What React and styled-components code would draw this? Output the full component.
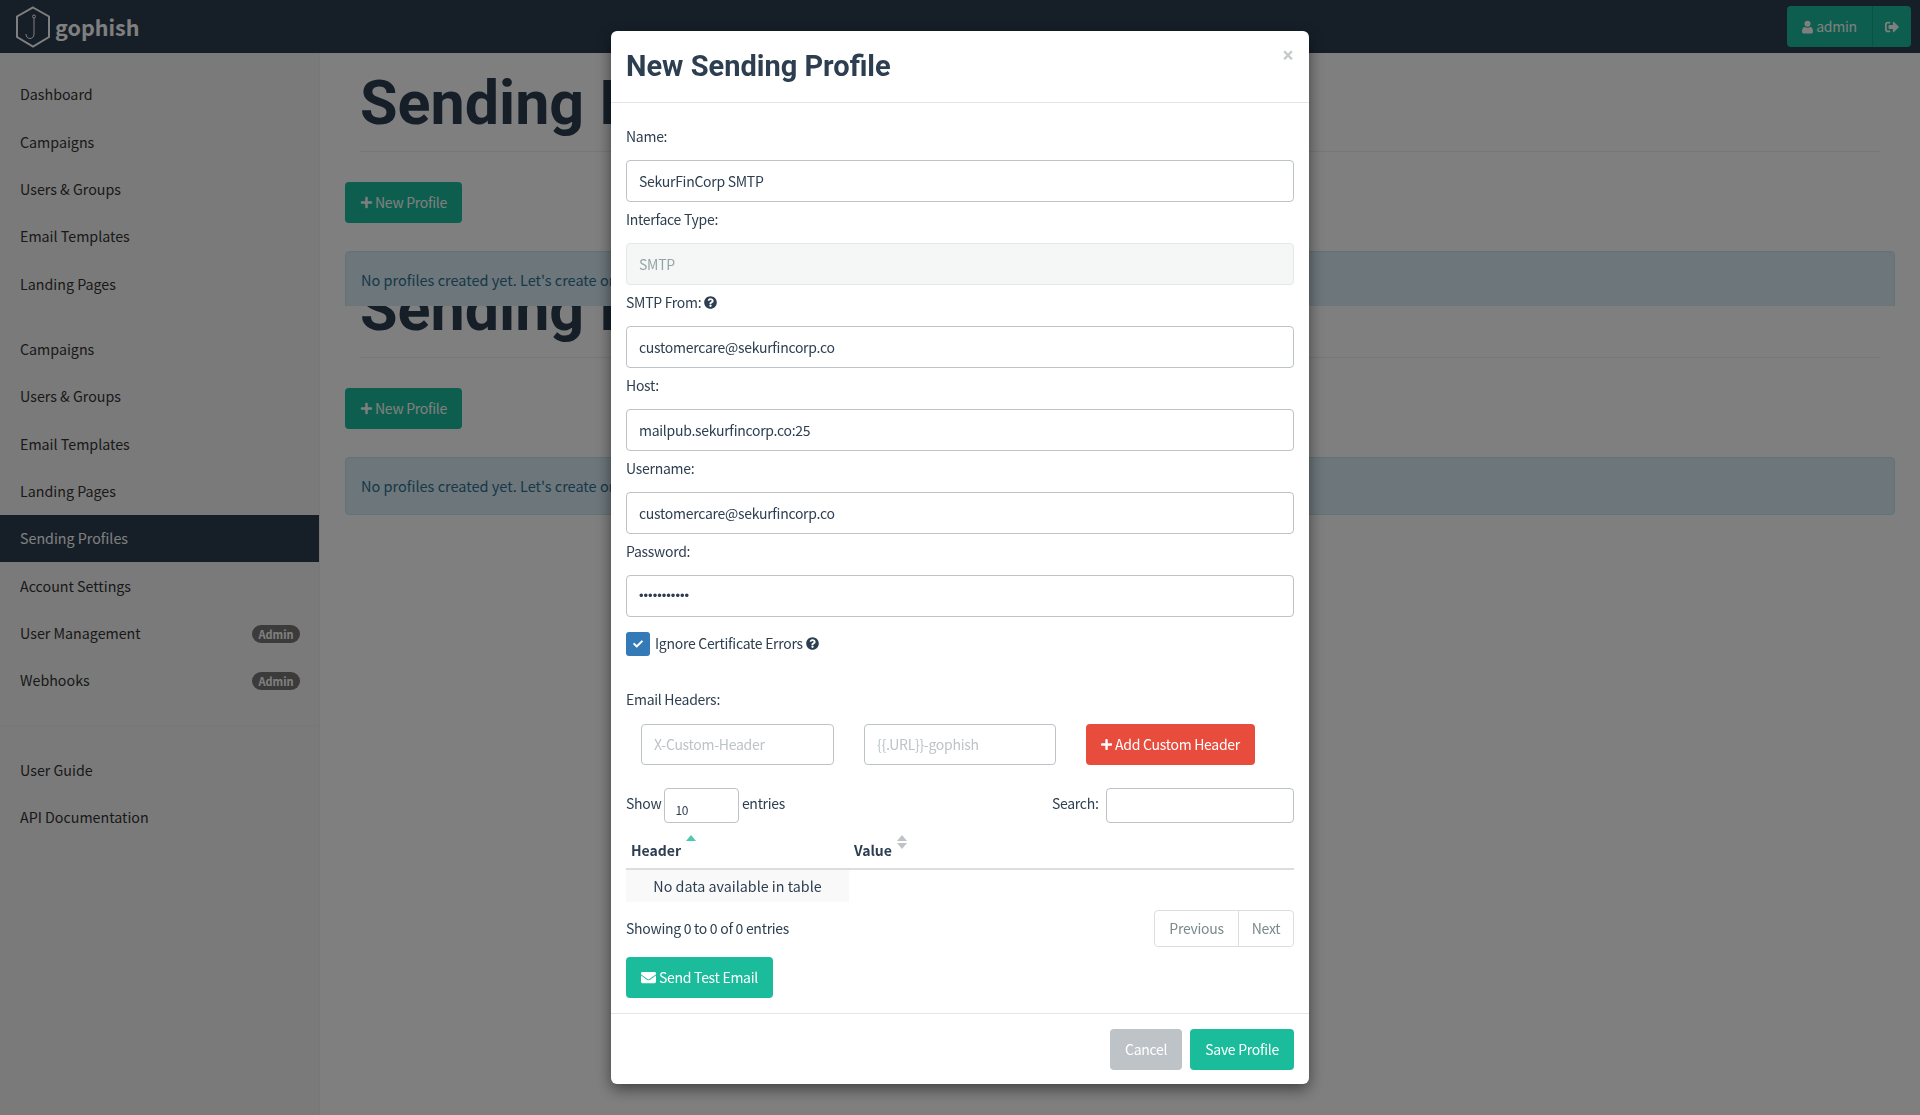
import React from "react";
import styled, { createGlobalStyle } from "styled-components";
import { FaPlus, FaEnvelope, FaCheck, FaQuestionCircle, FaSignOutAlt } from "react-icons/fa";

const GlobalStyle = createGlobalStyle`
  html, body {
    margin: 0;
    height: 100%;
    overflow: hidden;
  }
  body {
    font-family: "Noto Sans CJK SC", "Noto Sans", sans-serif;
    font-size: 14px;
    letter-spacing: -0.28px;
    line-height: 23px;
    color: #2c3e50;
    background: #fff;
  }
  * {
    box-sizing: border-box;
  }
`;

const Navbar = styled.div`
  display: flex;
  align-items: center;
  justify-content: space-between;
  height: 53px;
  padding: 0 9px 0 15px;
  background: #2c3e50;
`;

const Brand = styled.div`
  display: flex;
  align-items: center;
  gap: 4px;
  color: #fff;
  font-size: 21.5px;
  font-weight: 700;
  letter-spacing: 0;
`;

const UserGroup = styled.div`
  display: flex;
  height: 41px;
  border-radius: 4px;
  overflow: hidden;
  background: #1abc9c;
  color: #fff;
`;

const UserPart = styled.div`
  display: flex;
  align-items: center;
  justify-content: center;
  gap: 3px;
  width: ${(p) => p.$w}px;
  & + & {
    border-left: 1px solid #17a589;
  }
`;

const Layout = styled.div`
  display: grid;
  grid-template-columns: 320px 1fr;
  height: 1062px;
`;

const Sidebar = styled.div`
  padding-top: 18px;
  background: #f5f5f5;
  border-right: 1px solid #eee;
  font-size: 14.25px;
  letter-spacing: 0;
`;

const NavGroup = styled.div`
  margin-bottom: 18.25px;
`;

const NavItem = styled.div`
  display: flex;
  align-items: center;
  justify-content: space-between;
  height: 47.3px;
  padding: 0 19px 1.5px 20px;
  color: ${(p) => (p.$active ? "#fff" : "#333")};
  background: ${(p) => (p.$active ? "#2c3e50" : "transparent")};
`;

const Badge = styled.span`
  display: block;
  width: 48px;
  height: 18px;
  margin-top: 3px;
  border-radius: 9px;
  background: #777;
  color: #fff;
  font-size: 11px;
  font-weight: 700;
  line-height: 18px;
  text-align: center;
`;

const SideRule = styled.div`
  height: 1px;
  margin: 21px 0 20.5px;
  background: #eee;
`;

const Main = styled.div`
  padding: 0 25px;
`;

const Section = styled.div`
  position: relative;
  z-index: ${(p) => (p.$clipped ? 1 : 0)};
  height: ${(p) => (p.$clipped ? "253px" : "auto")};
  margin-bottom: ${(p) => (p.$clipped ? "-47px" : "0")};
  overflow: ${(p) => (p.$clipped ? "hidden" : "visible")};
`;

const PageHeader = styled.div`
  height: 99px;
  margin: 0 15px;
  border-bottom: 1px solid #eee;
`;

const PageTitle = styled.h1`
  margin: 0;
  font-family: Roboto, sans-serif;
  font-size: 61px;
  font-weight: 700;
  letter-spacing: 0;
  line-height: 100px;
  white-space: nowrap;
`;

const Button = styled.button`
  display: inline-flex;
  align-items: center;
  justify-content: center;
  gap: 3px;
  height: 41px;
  padding: 0 15px;
  border: 0;
  border-radius: 4px;
  background: ${(p) => p.$bg || "#1abc9c"};
  color: #fff;
  font: inherit;
  letter-spacing: inherit;
  white-space: nowrap;
  svg {
    width: 13px;
    height: 13px;
  }
`;

const NewButton = styled(Button)`
  gap: 2px;
  margin-top: 30px;
`;

const Alert = styled.div`
  height: 58px;
  margin-top: 28px;
  padding: 15px;
  border: 1px solid #bce8f1;
  border-radius: 4px;
  background: #d9edf7;
  color: #31708f;
  font-size: 14.5px;
  letter-spacing: 0;
  line-height: 26px;
`;

const Backdrop = styled.div`
  position: fixed;
  inset: 0;
  z-index: 10;
  background: rgba(0, 0, 0, 0.5);
`;

const ModalLayer = styled.div`
  position: fixed;
  inset: 0;
  z-index: 11;
  display: flex;
  justify-content: center;
  align-items: flex-start;
  padding-top: 31px;
`;

const Modal = styled.div`
  width: 698px;
  height: 1053px;
  border-radius: 6px;
  background: #fff;
  box-shadow: 0 5px 15px rgba(0, 0, 0, 0.5);
`;

const ModalHeader = styled.div`
  display: flex;
  align-items: flex-start;
  justify-content: space-between;
  height: 72px;
  padding: 15px;
  border-bottom: 1px solid #e5e5e5;
`;

const ModalTitle = styled.h4`
  margin: 1px 0 0;
  font-family: Roboto, sans-serif;
  font-size: 29px;
  font-weight: 700;
  letter-spacing: 0;
  line-height: 38px;
`;

const Close = styled.span`
  margin: -1px 1px 0 0;
  color: #c4c8c8;
  font-family: Roboto, sans-serif;
  font-size: 20px;
  font-weight: 700;
  line-height: 20px;
`;

const ModalBody = styled.div`
  padding: 15.5px 15px 15px;
`;

const Label = styled.div`
  display: flex;
  align-items: center;
  gap: 3px;
  margin: 6px 0 12.5px;
  svg {
    width: 13px;
    height: 13px;
  }
`;

const Input = styled.input`
  display: block;
  width: 100%;
  height: 41.5px;
  padding: 0 12px;
  border: 1px solid #bdc3c7;
  border-radius: 4px;
  background: ${(p) => (p.disabled ? "#f5f7f7" : "#fff")};
  color: ${(p) => (p.disabled ? "#95a5a6" : "#2c3e50")};
  font: inherit;
  letter-spacing: inherit;
  opacity: 1;
  outline: none;
  &:disabled {
    border-color: #e4e8e8;
  }
  &::placeholder {
    color: #bdc3c7;
    opacity: 1;
  }
  &[type="password"] {
    font-family: "Liberation Sans", sans-serif;
    font-size: 13px;
    letter-spacing: 0;
  }
`;

const CheckRow = styled.div`
  display: flex;
  align-items: center;
  gap: 5px;
  margin-top: 15px;
  height: 24px;
`;

const CheckBox = styled.span`
  display: flex;
  align-items: center;
  justify-content: center;
  width: 24px;
  height: 24px;
  border-radius: 3px;
  background: #337ab7;
  color: #fff;
  svg {
    width: 10px;
    height: 10px;
  }
`;

const HelpText = styled.span`
  display: inline-flex;
  align-items: center;
  gap: 3px;
  svg {
    width: 13px;
    height: 13px;
  }
`;

const HeadersLabel = styled(Label)`
  margin-top: 32.5px;
`;

const HeaderInputs = styled.div`
  display: grid;
  grid-template-columns: 193px 192px 169px;
  column-gap: 30px;
  padding-left: 15px;
`;

const TableTop = styled.div`
  display: flex;
  align-items: flex-start;
  justify-content: space-between;
  margin-top: 22.5px;
`;

const Inline = styled.div`
  display: flex;
  gap: ${(p) => p.$gap || 3}px;
  height: 35px;
  align-items: flex-start;
  line-height: 31px;
`;

const SizeBox = styled.div`
  width: 74.5px;
  height: 35px;
  padding: 8px 0 0 10px;
  border: 1px solid #bdc3c7;
  border-radius: 4px;
  font-size: 12px;
  line-height: 26px;
`;

const SearchBox = styled(Input)`
  width: 188.5px;
  height: 35px;
`;

const Table = styled.table`
  width: 100%;
  margin-top: 8px;
  border-collapse: collapse;
  table-layout: fixed;
`;

const HeaderCol = styled.col`
  width: 223px;
`;

const Th = styled.th`
  height: 38px;
  padding: 8px 5px 0;
  border-bottom: 2px solid #ddd;
  letter-spacing: 0;
  text-align: left;
  vertical-align: top;
`;

const ThInner = styled.div`
  display: flex;
  gap: 5px;
  align-items: flex-start;
  svg {
    margin-top: -4px;
  }
`;

const Td = styled.td`
  height: 33px;
  padding: 0;
  background: ${(p) => (p.$filled ? "#f9f9f9" : "transparent")};
  font-size: 14.3px;
  letter-spacing: 0;
  text-align: center;
`;

const TableBottom = styled.div`
  display: flex;
  align-items: center;
  justify-content: space-between;
  margin-top: 8px;
`;

const Pager = styled.div`
  display: flex;
  height: 37px;
  border: 1px solid #ddd;
  border-radius: 4px;
`;

const PagerItem = styled.span`
  display: flex;
  align-items: center;
  justify-content: center;
  width: ${(p) => p.$w}px;
  color: #7b8a8b;
  & + & {
    border-left: 1px solid #ddd;
  }
`;

const TestButton = styled(Button)`
  margin-top: 10px;
  svg {
    width: 15px;
    height: 15px;
  }
`;

const ModalFooter = styled.div`
  display: flex;
  justify-content: flex-end;
  gap: 8px;
  padding: 15px;
  border-top: 1px solid #e5e5e5;
`;

const sideTop = ["Dashboard", "Campaigns", "Users & Groups", "Email Templates", "Landing Pages"];
const sideMain = ["Campaigns", "Users & Groups", "Email Templates", "Landing Pages", "Sending Profiles", "Account Settings"];
const sideAdmin = ["User Management", "Webhooks"];
const sideHelp = ["User Guide", "API Documentation"];

const Logo = () => (
  <svg width="36" height="42" viewBox="0 0 36 42" fill="none" stroke="#fff" strokeWidth="2">
    <path d="M18 1.5 34 10.5 34 31 18 40.5 2 31 2 10.5Z" />
    <path d="M19 12V28C19 34 11 34 11 28" strokeWidth="1" />
    <circle cx="19" cy="10.5" r="1.5" strokeWidth="1" />
  </svg>
);

const UserIcon = () => (
  <svg width="11" height="14" viewBox="0 0 12 14" fill="currentColor">
    <circle cx="6" cy="3.4" r="3.3" />
    <path d="M0 12.3C0 8.8 1.2 6.9 3 6.9 4.2 8 7.8 8 9 6.9 10.8 6.9 12 8.8 12 12.3 12 13.4 11.2 14 10.2 14H1.8C.8 14 0 13.4 0 12.3Z" />
  </svg>
);

const SortUp = ({ active }) => (
  <svg width="10" height="15" viewBox="0 0 10 15">
    <path d="M5 0 10 6H0Z" fill={active ? "#48c9b0" : "#bdc3c7"} />
    {!active && <path d="M5 14 10 8H0Z" fill="#bdc3c7" />}
  </svg>
);

const Profile = ({ clipped }) => (
  <Section $clipped={clipped}>
    <PageHeader>
      <PageTitle>Sending Profiles</PageTitle>
    </PageHeader>
    <NewButton>
      <FaPlus /> New Profile
    </NewButton>
    <Alert>No profiles created yet. Let's create one!</Alert>
  </Section>
);

const Field = ({ label, help, ...rest }) => (
  <>
    <Label>
      {label} {help && <FaQuestionCircle />}
    </Label>
    <Input readOnly {...rest} />
  </>
);

export default function App() {
  return (
    <>
      <GlobalStyle />
      <Navbar>
        <Brand>
          <Logo />
          gophish
        </Brand>
        <UserGroup>
          <UserPart $w={85}>
            <UserIcon /> admin
          </UserPart>
          <UserPart $w={39}>
            <FaSignOutAlt />
          </UserPart>
        </UserGroup>
      </Navbar>
      <Layout>
        <Sidebar>
          <NavGroup>
            {sideTop.map((t) => (
              <NavItem key={t}>{t}</NavItem>
            ))}
          </NavGroup>
          <div>
            {sideMain.map((t) => (
              <NavItem key={t} $active={t === "Sending Profiles"}>
                {t}
              </NavItem>
            ))}
            {sideAdmin.map((t) => (
              <NavItem key={t}>
                {t}
                <Badge>Admin</Badge>
              </NavItem>
            ))}
          </div>
          <SideRule />
          {sideHelp.map((t) => (
            <NavItem key={t}>{t}</NavItem>
          ))}
        </Sidebar>
        <Main>
          <Profile clipped />
          <Profile />
        </Main>
      </Layout>
      <Backdrop />
      <ModalLayer>
        <Modal>
          <ModalHeader>
            <ModalTitle>New Sending Profile</ModalTitle>
            <Close>×</Close>
          </ModalHeader>
          <ModalBody>
            <Field label="Name:" value="SekurFinCorp SMTP" />
            <Field label="Interface Type:" value="SMTP" disabled />
            <Field label="SMTP From:" help value="customercare@sekurfincorp.co" />
            <Field label="Host:" value="mailpub.sekurfincorp.co:25" />
            <Field label="Username:" value="customercare@sekurfincorp.co" />
            <Field label="Password:" type="password" value="xxxxxxxxxxx" />
            <CheckRow>
              <CheckBox>
                <FaCheck />
              </CheckBox>
              <HelpText>
                Ignore Certificate Errors <FaQuestionCircle />
              </HelpText>
            </CheckRow>
            <HeadersLabel>Email Headers:</HeadersLabel>
            <HeaderInputs>
              <Input placeholder="X-Custom-Header" />
              <Input placeholder="{{.URL}}-gophish" />
              <Button $bg="#e74c3c">
                <FaPlus /> Add Custom Header
              </Button>
            </HeaderInputs>
            <TableTop>
              <Inline>
                Show <SizeBox>10</SizeBox> entries
              </Inline>
              <Inline $gap={7}>
                Search: <SearchBox />
              </Inline>
            </TableTop>
            <Table>
              <colgroup>
                <HeaderCol />
                <col />
              </colgroup>
              <thead>
                <tr>
                  <Th>
                    <ThInner>
                      Header <SortUp active />
                    </ThInner>
                  </Th>
                  <Th>
                    <ThInner>
                      Value <SortUp />
                    </ThInner>
                  </Th>
                </tr>
              </thead>
              <tbody>
                <tr>
                  <Td $filled>No data available in table</Td>
                  <Td />
                </tr>
              </tbody>
            </Table>
            <TableBottom>
              <span>Showing 0 to 0 of 0 entries</span>
              <Pager>
                <PagerItem $w={83}>Previous</PagerItem>
                <PagerItem $w={55}>Next</PagerItem>
              </Pager>
            </TableBottom>
            <TestButton>
              <FaEnvelope /> Send Test Email
            </TestButton>
          </ModalBody>
          <ModalFooter>
            <Button $bg="#bdc3c7">Cancel</Button>
            <Button>Save Profile</Button>
          </ModalFooter>
        </Modal>
      </ModalLayer>
    </>
  );
}
